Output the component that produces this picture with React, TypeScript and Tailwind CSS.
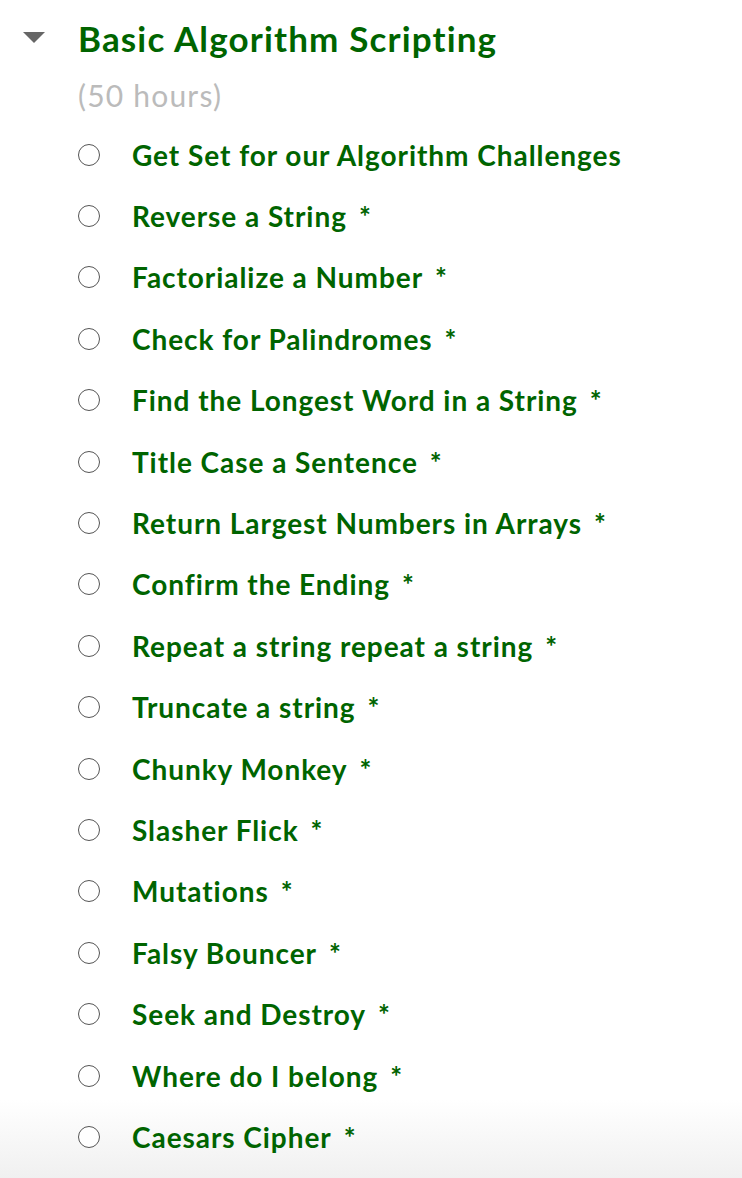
const challenges = [
  { title: 'Get Set for our Algorithm Challenges', required: false },
  { title: 'Reverse a String', required: true },
  { title: 'Factorialize a Number', required: true },
  { title: 'Check for Palindromes', required: true },
  { title: 'Find the Longest Word in a String', required: true },
  { title: 'Title Case a Sentence', required: true },
  { title: 'Return Largest Numbers in Arrays', required: true },
  { title: 'Confirm the Ending', required: true },
  { title: 'Repeat a string repeat a string', required: true },
  { title: 'Truncate a string', required: true },
  { title: 'Chunky Monkey', required: true },
  { title: 'Slasher Flick', required: true },
  { title: 'Mutations', required: true },
  { title: 'Falsy Bouncer', required: true },
  { title: 'Seek and Destroy', required: true },
  { title: 'Where do I belong', required: true },
  { title: 'Caesars Cipher', required: true },
]

export default function App() {
  return (
    <div className="min-h-[1178px] w-[742px] overflow-hidden bg-[linear-gradient(to_bottom,#ffffff_0px,#ffffff_1100px,#f0f0f0_1178px)] font-['Lato','Noto_Sans',sans-serif]">
      <div className="flex pt-[18px]">
        {/* caret */}
        <div className="w-[78px] h-[40px] flex items-center pl-[23px]">
          <svg width="22" height="12" viewBox="0 0 22 12">
            <polygon points="0,0 22,0 11,11" fill="#666666" />
          </svg>
        </div>
        <div className="flex-1">
          <h2 className="text-[35px] leading-[40px] font-bold text-[#006400] tracking-[1.15px]">Basic Algorithm Scripting</h2>
          <p className="mt-[19px] text-[30px] leading-[36px] text-[#bbbbbb] tracking-[1.2px]">(50 hours)</p>
          <ul className="mt-[11px]">
            {challenges.map((c) => (
              <li key={c.title} className="h-[61.4px] flex items-center">
                <span className="w-[22px] h-[22px] rounded-full border border-[#555555] bg-white shrink-0" />
                <span className="ml-[32px] text-[28px] font-bold text-[#006400] whitespace-nowrap tracking-[0.95px]">
                  {c.title}
                  {c.required && <span className="ml-[12px] text-[#006400]">*</span>}
                </span>
              </li>
            ))}
          </ul>
        </div>
      </div>
    </div>
  )
}
